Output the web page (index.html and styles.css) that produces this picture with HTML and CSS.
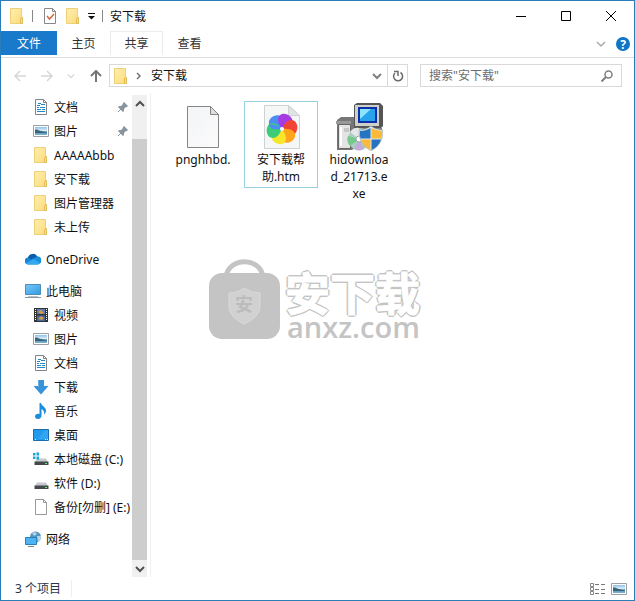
FILE: index.html
```
<!DOCTYPE html>
<html lang="zh-CN">
<head>
<meta charset="utf-8">
<meta name="viewport" content="width=device-width, initial-scale=1">
<title>安下载</title>
<link rel="stylesheet" href="styles.css">
</head>
<body>
<svg class="defs" aria-hidden="true">
  <defs>
    <linearGradient id="folderFill" x1="0" y1="0" x2="1" y2="1"><stop offset="0" stop-color="#ffeeb0"/><stop offset="1" stop-color="#fbdc79"/></linearGradient>
    <linearGradient id="screenFill" x1="0" y1="0" x2="1" y2="1"><stop offset="0" stop-color="#7cc8f5"/><stop offset="1" stop-color="#2d9be6"/></linearGradient>
    <linearGradient id="skyFill" x1="0" y1="0" x2="0" y2="1"><stop offset="0" stop-color="#8fc0e6"/><stop offset=".45" stop-color="#d9eef8"/><stop offset=".6" stop-color="#5b8ba5"/><stop offset="1" stop-color="#7db6d4"/></linearGradient>
    <linearGradient id="paperFill" x1="0" y1="0" x2="1" y2="1"><stop offset="0" stop-color="#f3f4f6"/><stop offset="1" stop-color="#fbfbfc"/></linearGradient>
  </defs>
  <symbol id="folder" viewBox="0 0 16 16"><path d="M1.500.5h11v9h1v6h-12z" fill="url(#folderFill)" stroke="#ecd078"/><path d="M11.500 15.500V10.500l2-1v6z" fill="#f8e08c" stroke="#dfbd5b"/></symbol>
  <symbol id="doc" viewBox="0 0 16 16"><path d="M2.500.5h8l3 3v12h-11z" fill="#fff" stroke="#7d8388"/><path d="M10.500.5v3h3" fill="none" stroke="#7d8388"/><path d="M4 6.500h3M8 5.500h4M4 8.500h2M7 8.500h5M4 10.500h4M9 10.500h3M4 12.500h8M5 4.500h3" stroke="#2586c4"/></symbol>
  <symbol id="picture" viewBox="0 0 16 16"><path d="M.5 2.500h15v11H.5z" fill="#fff" stroke="#9aa0a5"/><path d="M2 4h12v8H2z" fill="url(#skyFill)"/><path d="M2 6.500c4 0 5 2 12 3v.500H2z" fill="#37657b"/></symbol>
  <symbol id="cloud" viewBox="0 0 16 16"><path d="M3.500 13.500a3.500 3.500 0 0 1-.5-7 5 5 0 0 1 9-1 4 4 0 0 1 .5 8z" fill="#1686d9"/><path d="M3 6.500a5 5 0 0 1 9.200-1L6 8.500z" fill="#0a5cab"/><path d="M9 8l3.200-2.500a3.800 3.800 0 0 1 3 6.500z" fill="#1490df"/><path d="M1 12.200L8.500 8l6.700 4q-1 1.500-2.700 1.500h-9q-1.500 0-2.500-1.300z" fill="#35a9ee"/></symbol>
  <symbol id="pc" viewBox="0 0 16 16"><path d="M.5 1.500h15v10H.5z" fill="url(#screenFill)" stroke="#4d8db5"/><path d="M3 13h10v1H3z" fill="#b9c3ca"/><path d="M0 14.500h16" stroke="#8c969d"/></symbol>
  <symbol id="video" viewBox="0 0 16 16"><path d="M1 1h14v14H1z" fill="#333"/><path d="M2.500 2v12M13.500 2v12" stroke="#fff" stroke-dasharray="1 1"/><path d="M4 2h8v5H4z" fill="#607fb0"/><path d="M4 8.500h8V14H4z" fill="#466aa3"/><path d="M5 5l3-2 3 3-3 1zM5 12l3-3 3 2-2 2z" fill="#d79b43"/></symbol>
  <symbol id="down" viewBox="0 0 16 16"><path d="M5 1h6v6h4.500L8 15.500.500 7H5z" fill="#3792d8"/><path d="M5 1h1v7H5z" fill="#68afe4"/></symbol>
  <symbol id="music" viewBox="0 0 16 16"><path d="M6.500 0h1.500c.5 3 5 4 5 7.500 0 2-1 3-2 4 .5-3-.500-4.500-2.500-5.500V12.500c0 4.500-6.500 4.500-6.500 1C2 11 5 10.500 6.500 11z" fill="#1c8ddd"/></symbol>
  <symbol id="desktop" viewBox="0 0 16 16"><path d="M.5 2.500h15v11H.5z" fill="#219bed" stroke="#1b6dac"/><path d="M5 12l7-9h3v9z" fill="#34a5f0"/><path d="M2 12.500h2M12 12.500h3" stroke="#e3f4ff" stroke-dasharray="1 1"/></symbol>
  <symbol id="drive" viewBox="0 0 16 16"><path d="M4 7.500h9l2 3.500H2z" fill="#c6c9cb"/><path d="M1.500 10.500h14V14h-14z" fill="#45494b"/><path d="M12 12h2v1h-2z" fill="#65df7d"/></symbol>
  <symbol id="sysdrive" viewBox="0 0 16 16"><use href="#drive" width="16" height="16"/><path d="M0 2h2.500v2.500H0zM3.500 1.500H6v3H3.500zM0 5.500h2.500V8H0zM3.500 5.500H6v3H3.500z" fill="#17a8d5"/></symbol>
  <symbol id="blank" viewBox="0 0 16 16"><path d="M2.500.5h8l3 3v12h-11z" fill="#fff" stroke="#999"/><path d="M10.500.5v3h3" fill="none" stroke="#999"/></symbol>
  <symbol id="network" viewBox="0 0 16 16"><circle cx="10.500" cy="6" r="5.500" fill="#5596c0"/><path d="M7 2q4-2 5 1L9 5zM12 5l4 0q0 4-3 6z" fill="#b5d5e8"/><path d="M.5 6.500h11v7H.5z" fill="#4cb4f2" stroke="#287fb9"/><path d="M3 15.500h6" stroke="#6d8c9e"/></symbol>
  <symbol id="pin" viewBox="0 0 12 12"><path d="M7 1l4 4-1 1-1 0-2 2v2L6 11 1 6l1-1h2l2-2V2z" fill="#89959e"/><path d="M4 8L1 11" stroke="#89959e"/></symbol>
  <symbol id="chevron" viewBox="0 0 10 10"><path d="M1 3l4 4 4-4" fill="none" stroke="currentColor" stroke-width="1.500"/></symbol>
</svg>

<div class="window">
  <header class="titlebar">
    <div class="quick">
      <svg class="icon"><use href="#folder"/></svg>
      <span class="divider"></span>
      <button class="plain" aria-label="属性"><svg class="icon" viewBox="0 0 16 16"><path d="M2.500.5h8l3 3v12h-11z" fill="#fff" stroke="#888"/><path d="M10.500.5v3h3" fill="none" stroke="#888"/><path d="M5 8l2.500 3L12 6" fill="none" stroke="#d4673d" stroke-width="1.500"/></svg></button>
      <button class="plain" aria-label="新建文件夹"><svg class="icon"><use href="#folder"/></svg></button>
      <button class="plain" aria-label="自定义快速访问工具栏"><svg class="small" viewBox="0 0 10 10"><path d="M0 2.500h7" stroke="#111"/><path d="M0 5h7L3.500 8.500z" fill="#111"/></svg></button>
      <span class="divider"></span>
    </div>
    <h1 class="title">安下载</h1>
    <div class="controls">
      <button class="plain control" aria-label="最小化"><svg class="small" viewBox="0 0 10 10"><path d="M0 5.500h10" stroke="#000"/></svg></button>
      <button class="plain control" aria-label="最大化"><svg class="small" viewBox="0 0 10 10"><path d="M.5.5h9v9h-9z" fill="none" stroke="#000"/></svg></button>
      <button class="plain control" aria-label="关闭"><svg class="small" viewBox="0 0 10 10"><path d="M0 0l10 10M10 0L0 10" stroke="#000"/></svg></button>
    </div>
  </header>

  <nav class="ribbon" aria-label="功能区">
    <button class="tab file">文件</button>
    <button class="tab">主页</button>
    <button class="tab hover">共享</button>
    <button class="tab">查看</button>
    <div class="ribbon-end">
      <button class="plain expand" aria-label="展开功能区"><svg class="small"><use href="#chevron"/></svg></button>
      <button class="plain help" aria-label="帮助">?</button>
    </div>
  </nav>

  <div class="address-row">
    <div class="history">
      <button class="plain faint" aria-label="后退"><svg class="arrow" viewBox="0 0 12 12"><path d="M12 6H1M6 1L1 6l5 5" fill="none" stroke="currentColor" stroke-width="1.500"/></svg></button>
      <button class="plain faint" aria-label="前进"><svg class="arrow" viewBox="0 0 12 12"><path d="M0 6h11M6 1l5 5-5 5" fill="none" stroke="currentColor" stroke-width="1.500"/></svg></button>
      <button class="plain faint" aria-label="最近位置"><svg class="tiny"><use href="#chevron"/></svg></button>
      <button class="plain" aria-label="上移"><svg class="arrow" viewBox="0 0 12 12"><path d="M6 12V1M1 6l5-5 5 5" fill="none" stroke="#787878" stroke-width="2"/></svg></button>
    </div>
    <div class="path">
      <svg class="icon"><use href="#folder"/></svg>
      <svg class="tiny crumb" viewBox="0 0 8 8"><path d="M2 1l3 3-3 3" fill="none" stroke="#777" stroke-width="1.500"/></svg>
      <button class="plain place">安下载</button>
      <button class="plain path-button" aria-label="以前的位置"><svg class="small" viewBox="0 0 10 10"><path d="M1 3l4 4 4-4" fill="none" stroke="#808080" stroke-width="2"/></svg></button>
      <button class="plain path-button refresh" aria-label="刷新"><svg class="arrow" viewBox="0 0 12 12"><path d="M8.500 2.500A4.500 4.500 0 1 1 3 3" fill="none" stroke="#6b6b6b" stroke-width="1.500"/><path d="M2 1.500h4V6" fill="none" stroke="#6b6b6b" stroke-width="1.500"/></svg></button>
    </div>
    <label class="search">
      <input type="search" placeholder='搜索"安下载"' aria-label="搜索">
      <svg class="arrow" viewBox="0 0 12 12"><circle cx="7.500" cy="4.500" r="3.500" fill="none" stroke="#808080" stroke-width="1.500"/><path d="M5 7L.500 11.500" stroke="#808080" stroke-width="2"/></svg>
    </label>
  </div>

  <div class="body">
    <div class="sidebar">
      <nav class="tree" aria-label="导航窗格">
        <div class="group">
          <a class="item child" href="#"><svg class="icon"><use href="#doc"/></svg><span>文档</span><svg class="pin"><use href="#pin"/></svg></a>
          <a class="item child" href="#"><svg class="icon"><use href="#picture"/></svg><span>图片</span><svg class="pin"><use href="#pin"/></svg></a>
          <a class="item child" href="#"><svg class="icon"><use href="#folder"/></svg><span>AAAAAbbb</span></a>
          <a class="item child" href="#"><svg class="icon"><use href="#folder"/></svg><span>安下载</span></a>
          <a class="item child" href="#"><svg class="icon"><use href="#folder"/></svg><span>图片管理器</span></a>
          <a class="item child" href="#"><svg class="icon"><use href="#folder"/></svg><span>未上传</span></a>
        </div>
        <div class="group">
          <a class="item" href="#"><svg class="icon"><use href="#cloud"/></svg><span>OneDrive</span></a>
        </div>
        <div class="group">
          <a class="item" href="#"><svg class="icon"><use href="#pc"/></svg><span>此电脑</span></a>
          <a class="item child" href="#"><svg class="icon"><use href="#video"/></svg><span>视频</span></a>
          <a class="item child" href="#"><svg class="icon"><use href="#picture"/></svg><span>图片</span></a>
          <a class="item child" href="#"><svg class="icon"><use href="#doc"/></svg><span>文档</span></a>
          <a class="item child" href="#"><svg class="icon"><use href="#down"/></svg><span>下载</span></a>
          <a class="item child" href="#"><svg class="icon"><use href="#music"/></svg><span>音乐</span></a>
          <a class="item child" href="#"><svg class="icon"><use href="#desktop"/></svg><span>桌面</span></a>
          <a class="item child" href="#"><svg class="icon"><use href="#sysdrive"/></svg><span>本地磁盘 (C:)</span></a>
          <a class="item child" href="#"><svg class="icon"><use href="#drive"/></svg><span>软件 (D:)</span></a>
          <a class="item child" href="#"><svg class="icon"><use href="#blank"/></svg><span>备份[勿删] (E:)</span></a>
        </div>
        <div class="group">
          <a class="item" href="#"><svg class="icon"><use href="#network"/></svg><span>网络</span></a>
        </div>
      </nav>
      <div class="scrollbar">
        <button class="plain scroll-button" aria-label="向上滚动"><svg class="small" viewBox="0 0 10 10"><path d="M1 7l4-4 4 4" fill="none" stroke="#505050" stroke-width="2"/></svg></button>
        <div class="track"><div class="thumb"></div></div>
        <button class="plain scroll-button" aria-label="向下滚动"><svg class="small" viewBox="0 0 10 10"><path d="M1 3l4 4 4-4" fill="none" stroke="#505050" stroke-width="2"/></svg></button>
      </div>
    </div>

    <main class="content">
      <div class="files">
        <a class="file-item" href="#">
          <svg class="file-icon" viewBox="0 0 48 48"><path d="M8.500 3.500h23l8 8v33h-31z" fill="url(#paperFill)" stroke="#858585"/><path d="M31.500 3.500v8h8z" fill="#dedede" stroke="#858585"/></svg>
          <span>pnghhbd.</span>
        </a>
        <a class="file-item selected" href="#">
          <svg class="file-icon" viewBox="0 0 48 48"><path d="M7.500 2.500h24l11 10v33h-35z" fill="#f5f6f6" stroke="#cfd2d4"/><path d="M31.500 2.500v10h11z" fill="#e1e4e5" stroke="#cfd2d4"/>
            <g transform="translate(25 26)">
              <path d="M0 0C-9 1-14-2-13-8-11-13-5-15-1-13 2-9 2-4 0 0z" fill="#4b8df0"/>
              <path d="M0 0C-9 1-14-2-13-8-11-13-5-15-1-13 2-9 2-4 0 0z" fill="#a63be4" transform="rotate(60)"/>
              <path d="M0 0C-9 1-14-2-13-8-11-13-5-15-1-13 2-9 2-4 0 0z" fill="#f24436" transform="rotate(120)"/>
              <path d="M0 0C-9 1-14-2-13-8-11-13-5-15-1-13 2-9 2-4 0 0z" fill="#ffa51c" transform="rotate(180)"/>
              <path d="M0 0C-9 1-14-2-13-8-11-13-5-15-1-13 2-9 2-4 0 0z" fill="#f7e62a" transform="rotate(240)"/>
              <path d="M0 0C-9 1-14-2-13-8-11-13-5-15-1-13 2-9 2-4 0 0z" fill="#3dcc78" transform="rotate(300)"/>
              <path d="M0 0C-9 1-12 0-13-5L-3-3z" fill="#4b8df0"/>
              <circle r="2" fill="#fff"/>
            </g></svg>
          <span>安下载帮助.htm</span>
        </a>
        <a class="file-item" href="#">
          <svg class="file-icon" viewBox="0 0 48 48"><path d="M2 17l4-3h15v30l-4 3H2z" fill="#777"/><path d="M1 18h15v3H1z" fill="#999"/><path d="M3.500 21.500h12v24h-12z" fill="#e4e4e4" stroke="#666"/><path d="M5 24h2v19H5z" fill="#fff"/><path d="M9 26h5M9 28h5" stroke="#aaa"/>
            <path d="M19 2l3-2h23l3 3v20l-2 2H19z" fill="#555"/><path d="M20 2h24v21H20z" fill="#d0d0ca"/><path d="M23 4h19v16H23z" fill="#0930a9"/><path d="M25 6h15v12H25z" fill="#27a2ed"/><path d="M25 6h11L25 16z" fill="#8ce5fb"/><path d="M18 25h29v6H18z" fill="#858585"/><path d="M20 26h24v2H20z" fill="#e7e7df"/>
            <circle cx="24" cy="36" r="11" fill="#a9cfc3"/><path d="M24 36l-9-7q4-5 9-4z" fill="#e4e8e8"/><path d="M24 36l-9 7q-4-5-2-10z" fill="#77c88b"/><path d="M24 36l-5 10q5 3 10 0z" fill="#c3acd8"/><circle cx="24" cy="36" r="3" fill="#fff" stroke="#98aaa8"/>
            <path d="M36 23q5 4 12 4 1 14-12 21-13-7-12-21 7 0 12-4z" fill="#dfe7ec" stroke="#8795a0" stroke-width=".5"/><path d="M35.500 25v10.500H25.500q-1-4-.500-7.500 6 0 10.500-3z" fill="#2474bf"/><path d="M36.500 25q5 3 10.500 3 .5 4-1 7.500h-9.500z" fill="#fbb93a"/><path d="M26 36.500h9.500V47q-7-3-9.500-10.500z" fill="#fbb93a"/><path d="M36.500 36.500h9.500q-2 7-9.500 10.500z" fill="#2474bf"/></svg>
          <span>hidownload_21713.exe</span>
        </a>
      </div>
      <div class="watermark">
        <svg class="bag" viewBox="0 0 72 80"><path d="M17 17C21-2 50-2 54 17" fill="none" stroke="#c4c4c4" stroke-width="5"/><rect y="14" width="71" height="66" rx="13" fill="#c4c4c4"/><path d="M35 29q7 5 16 5v13q0 11-16 18-15-7-15-18V34q9 0 15-5z" fill="#d1d1d1" stroke="#dadada"/><text class="shield-text" x="35" y="52" text-anchor="middle">安</text></svg>
        <div class="brand"><span class="brand-name">安下载</span><span class="brand-site">anxz.com</span></div>
      </div>
    </main>
  </div>

  <footer class="status">
    <span class="count">3 个项目</span>
    <div class="views">
      <button class="plain" aria-label="详细信息"><svg class="icon" viewBox="0 0 16 16"><path d="M1.500 2.500h3v3h-3zM1.500 6.500h3v3h-3zM1.500 10.500h3v3h-3z" fill="none" stroke="#888"/><path d="M6 3.500h4M12 3.500h4M6 8.500h4M12 8.500h4M6 12.500h4M12 12.500h4" stroke="#777"/></svg></button>
      <button class="plain" aria-label="大图标"><svg class="icon"><use href="#picture"/></svg></button>
    </div>
  </footer>
</div>
</body>
</html>
```
FILE: styles.css
```
* { box-sizing: border-box; }

body {
  margin: 0;
  background: #fff;
  color: #111;
  font: 12px/17px "Noto Sans", "Noto Sans CJK SC", sans-serif;
}

a { color: inherit; text-decoration: none; }
svg { display: block; flex: none; }
.defs { position: absolute; width: 0; height: 0; }
.icon { width: 16px; height: 16px; }
.arrow { width: 12px; height: 12px; }
.small { width: 10px; height: 10px; }
.tiny { width: 8px; height: 8px; }

.plain {
  display: flex;
  align-items: center;
  justify-content: center;
  padding: 0;
  border: 0;
  background: none;
  color: inherit;
  font: inherit;
}
.faint { color: #d6d6d6; }

.window {
  display: flex;
  flex-direction: column;
  min-height: 100vh;
  border: 1px solid #2b7db8;
}

.titlebar { display: flex; align-items: center; height: 30px; padding: 0 1px 0 8px; }
.quick { display: flex; align-items: center; gap: 7px; }
.divider { width: 1px; height: 12px; background: #888; }
.quick .divider:first-of-type { margin-right: 2px; }
.quick .divider:last-child { margin: 0 0 0 -3px; }
.title { margin: 0 0 0 7px; font-size: 12px; font-weight: 400; }
.controls { display: flex; align-self: stretch; margin-left: auto; }
.control { width: 45px; }

.ribbon { display: flex; height: 27px; border-bottom: 1px solid #dcdcdc; }
.tab {
  width: 53px;
  height: 24px;
  padding: 0;
  border: 1px solid transparent;
  border-bottom: 0;
  background: none;
  color: #333;
  font: inherit;
}
.file { width: 56px; background: #1979ca; color: #fff; }
.hover { border-color: #ececec; }
.ribbon-end { display: flex; align-items: center; gap: 10px; margin-left: auto; padding-right: 4px; }
.expand { color: #aaa; }
.help {
  width: 14px;
  height: 14px;
  border-radius: 50%;
  background: #0f75c8;
  color: #fff;
  font-weight: 700;
}

.address-row { display: flex; align-items: center; height: 35px; padding-right: 12px; }
.history { display: flex; align-items: center; justify-content: space-between; width: 108px; padding: 0 7px 0 13px; }
.path { display: flex; align-items: center; flex: 3 1 0; height: 23px; border: 1px solid #d9d9d9; padding-left: 3px; }
.crumb { margin: 0 8px 0 6px; }
.place { flex: 1; justify-content: flex-start; }
.path-button { align-self: stretch; width: 20px; }
.refresh { border-left: 1px solid #d9d9d9; }
.search {
  display: flex;
  align-items: center;
  flex: 2 1 0;
  max-width: 202px;
  height: 23px;
  margin-left: 12px;
  padding: 0 8px;
  border: 1px solid #d9d9d9;
}
.search input { flex: 1; min-width: 0; padding: 0; border: 0; outline: 0; background: none; font: inherit; }
.search input::placeholder { color: #6d6d6d; opacity: 1; }

.body { display: flex; flex: 1; }
.sidebar { display: flex; width: 150px; border-right: 1px solid #f0f0f0; padding-right: 3px; }
.tree { display: flex; flex: 1; flex-direction: column; gap: 8px; min-width: 0; margin-top: 2px; }
.item { display: flex; align-items: center; gap: 5px; height: 24px; padding-left: 24px; white-space: nowrap; }
.child { padding-left: 32px; }
.pin { width: 12px; height: 12px; margin: 0 3px 0 auto; }
.scrollbar { display: flex; flex: none; flex-direction: column; width: 15px; margin-top: 2px; background: #f0f0f0; }
.scroll-button { height: 17px; }
.track { display: flex; flex: 1; flex-direction: column; justify-content: flex-end; }
.thumb { height: 94%; background: #cdcdcd; }

.content { position: relative; flex: 1; min-width: 0; }
.files { display: flex; flex-wrap: wrap; align-items: flex-start; gap: 4px; padding: 8px 15px; }
.file-item {
  display: flex;
  flex-direction: column;
  align-items: center;
  width: 74px;
  padding: 1px 5px 2px;
  border: 1px solid transparent;
  text-align: center;
}
.file-item span { width: 100%; overflow-wrap: anywhere; }
.selected { border-color: #99d1de; }
.file-icon { width: 48px; height: 48px; }

.watermark { position: absolute; top: 166px; left: 58px; display: flex; color: #c4c4c4; }
.bag { width: 72px; height: 80px; }
.shield-text { fill: #bcbcbc; font: 700 18px "Noto Sans CJK SC", sans-serif; }
.brand { display: flex; flex-direction: column; padding: 12px 0 0 4px; }
.brand-name {
  color: #fff;
  font: 700 45px/42px "Noto Sans CJK SC", sans-serif;
  -webkit-text-stroke: 1px #fff;
  text-shadow: 2px 0 #c4c4c4, -2px 0 #c4c4c4, 0 2px #c4c4c4, 0 -2px #c4c4c4,
    1px 1px #c4c4c4, -1px 1px #c4c4c4, 1px -1px #c4c4c4, -1px -1px #c4c4c4;
}
.brand-site { padding-left: 2px; font: 600 29px/28px "Open Sans", sans-serif; }

.status { display: flex; align-items: center; justify-content: space-between; height: 23px; padding: 0 7px 0 14px; color: #26364d; }
.count { padding-right: 10px; border-right: 1px solid #eee; }
.views { display: flex; gap: 6px; }
```
